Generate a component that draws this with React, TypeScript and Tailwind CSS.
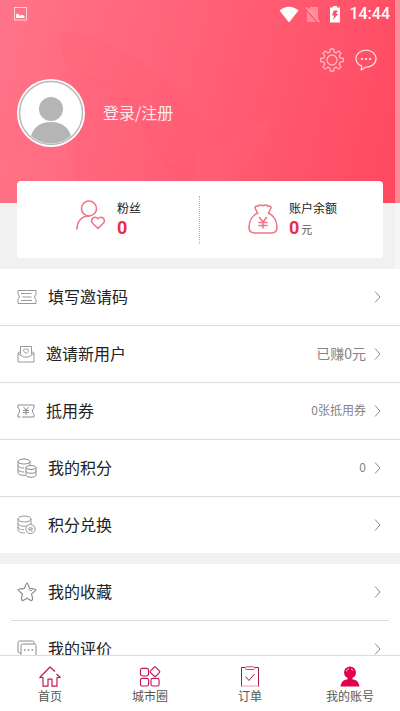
import { ReactNode } from "react";

type RowType = {
  title: string;
  icon: ReactNode;
  value?: string;
  small?: boolean;
  tight?: boolean;
  line?: "full" | "inset" | "none";
};

const StatusBar = () => {
  return (
    <div className="flex h-7 items-center justify-between pl-3.5 pr-2.5">
      <svg viewBox="0 0 13 14" className="h-3.5 w-[13px]" fill="none">
        <rect x="0.5" y="0.5" width="12" height="12.5" stroke="#ffd3da" />
        <path d="M2 11V7.500l1.500-1 1.500 1 1 1.300 1-.8h2l1.500 1.200V11z" fill="#fff" />
      </svg>
      <div className="flex items-center">
        <svg viewBox="0 0 20 17" className="mr-1.5 h-[17px] w-5" fill="#fff">
          <path d="M.5 4.500Q10-3 19.500 4.500L10 16.500z" />
        </svg>
        <svg viewBox="0 0 16 17" className="mr-2 h-[17px] w-4">
          <path d="M5.500 1H13v15H2V4.500z" fill="#ff8c9b" />
          <path d="M0 2.500l13.500 15" stroke="#ff5a70" strokeWidth="1.500" />
          <path d="M1 1.500l13.500 14.500" stroke="#ff9dab" strokeWidth="1.300" />
        </svg>
        <svg viewBox="0 0 12 17" className="mr-2 h-[17px] w-3">
          <path d="M4 0h4v1.500h3v15H1v-15h3z" fill="#fff" />
          <path d="M4.800 4.500h4L7 8h2.300L4 13.800 5.200 9.500H3z" fill="#ff5168" />
        </svg>
        <span className="font-[Roboto,sans-serif] text-[16px] font-medium leading-5 text-white">14:44</span>
      </div>
    </div>
  );
};

const GearIcon = () => (
  <svg viewBox="0 0 24 24" className="size-6" fill="none" stroke="#ffb9c2" strokeWidth="1.300" strokeLinejoin="round">
    <path d="M10.300 1h3.400l.5 3.100 2 .8 2.600-1.900 2.300 2.300-1.900 2.600.9 2.100 3.200.4v3.300l-3.200.5-.9 2 1.900 2.600-2.300 2.300-2.600-1.900-2 .8-.5 3h-3.400l-.5-3-2-.8L5.200 21.100l-2.300-2.300 1.900-2.600-.9-2-3.200-.5v-3.300l3.200-.4.9-2.100-1.900-2.600L5.200 3l2.600 1.900 2-.8z" />
    <circle cx="12" cy="12" r="5" />
  </svg>
);

const ChatIcon = () => (
  <svg viewBox="0 0 22 22" className="size-[22px]" fill="none">
    <path
      d="M6.800 17C3 15.500 1 13 1 9.700 1 4.900 5.500 1.200 11 1.200s10 3.700 10 8.500-4.500 8.400-10 8.400L6.200 20.900z"
      stroke="#ffe5e9"
      strokeWidth="1.200"
      strokeLinejoin="round"
    />
    <g fill="#fff">
      <circle cx="7" cy="10" r="1" />
      <circle cx="11" cy="10" r="1" />
      <circle cx="15" cy="10" r="1" />
    </g>
  </svg>
);

const Avatar = () => (
  <svg viewBox="0 0 68 68" className="size-[68px]">
    <defs>
      <clipPath id="face">
        <circle cx="34" cy="34" r="30.500" />
      </clipPath>
    </defs>
    <circle cx="34" cy="34" r="34" fill="#fff" />
    <circle cx="34" cy="34" r="31.500" fill="#fff" stroke="#b9b9b9" strokeWidth="1.500" />
    <g clipPath="url(#face)" fill="#b5b5b5">
      <circle cx="34" cy="30" r="12" />
      <path d="M13 62c1-12 9-19 21-19s20 7 21 19v6H13z" />
    </g>
  </svg>
);

const HeaderWaves = () => (
  <svg viewBox="0 0 400 203" preserveAspectRatio="none" className="absolute inset-0 h-full w-full">
    <path d="M60 32c40-2 95 35 120 62 14 16 20 28 24 34-14 20 0 40-14 46-40 5-40-65-80-86C85 76 60 78 60 32z" fill="#ff4a66" opacity=".1" />
    <path d="M60 70c50 5 80 25 95 70 10 25 35 40 60 25-20 30-100 30-130 38H78C70 160 80 120 60 70z" fill="#ff4a66" opacity=".08" />
    <path d="M0 155c30 2 45-20 60-60 0 50 15 80 20 108H0z" fill="#ff8c9c" opacity=".08" />
    <path d="M200 170c25-30 50-48 72-50-10 30-40 60-60 83h-40z" fill="#ff7a8c" opacity=".08" />
  </svg>
);

const FansIcon = () => (
  <svg viewBox="0 0 30 30" className="h-[30px] w-[30px]" fill="none" stroke="#ee7688" strokeWidth="1.600" strokeLinecap="round" strokeLinejoin="round">
    <circle cx="13" cy="8.500" r="7.500" />
    <path d="M1 29c0-8 5-13 12-13" />
    <path d="M22 28.500l-5.300-5.200c-3.300-3.300 1.500-8.300 5.300-4.600 3.800-3.700 8.600 1.300 5.300 4.600z" />
  </svg>
);

const MoneyBagIcon = () => (
  <svg viewBox="0 0 30 30" className="h-[30px] w-[30px]" fill="none" stroke="#ee7688" strokeWidth="1.600" strokeLinecap="round" strokeLinejoin="round">
    <path d="M9.500 9L7.300 4.500C6.500 2.500 8 1.600 10 2.200c1.300-1.500 3-1.500 5-.4 2-1.100 3.700-1.100 5 .4 2-.6 3.500.3 2.700 2.300L20.500 9" />
    <path d="M9.500 9C4.500 11.500 1 17 1 23c0 4 2 6 5.500 6h17c3.500 0 5.500-2 5.500-6 0-6-3.500-11.500-8.500-14" />
    <path d="M11.500 13.500l3.500 4.500 3.500-4.500M11 18.500h8M11 21.500h8M15 18v6" />
  </svg>
);

const TicketIcon = () => (
  <svg viewBox="0 0 20 16" className="w-5" fill="none" stroke="#999" strokeLinejoin="round">
    <path d="M1 1.500h18V5l-1.500 3 1.500 3v3.500H1V11l1.500-3L1 5z" />
    <path d="M4 4.500h10.500M5.500 8h9M4 11.500h11" />
  </svg>
);

const InviteIcon = () => (
  <svg viewBox="0 0 18 18" className="w-[18px]" fill="none" stroke="#999" strokeLinejoin="round">
    <path d="M3.500 9.500v-8h11v8M3.500 6.500L1 8v9h16V8l-2.500-1.500M1 8.500L6.500 12h5L17 8.500" />
    <path d="M9 8.500L6.800 6.400C5.500 4.800 7.600 3 9 4.700c1.400-1.700 3.500.1 2.200 1.700z" />
  </svg>
);

const CouponIcon = () => (
  <svg viewBox="0 0 18 14" className="w-[18px]" fill="none" stroke="#8c8c8c">
    <path d="M1 4V1h16v3c-2 1-2 5 0 6v3H5M3.500 13H1v-3c2-1 2-5 0-6" />
    <path d="M6.500 3L9 6l2.500-3M6 6.500h6M6 8.500h6M9 6v5" />
  </svg>
);

const CoinsIcon = () => (
  <svg viewBox="0 0 20 20" className="w-5" fill="none" stroke="#8c8c8c">
    <ellipse cx="7" cy="3.500" rx="6" ry="2.500" />
    <path d="M1 3.500V15c0 1.300 2.500 2.300 7 2.500M13 3.500V7M1 7.500c0 1.500 2.500 2.500 6 2.500M1 11.500c0 1.300 2.500 2.300 6 2.500" />
    <ellipse cx="14" cy="9.500" rx="5" ry="2" />
    <path d="M9 9.500v7.700c0 2.700 10 2.700 10 0V9.500M9 13.300c0 2.600 10 2.600 10 0" />
  </svg>
);

const ExchangeIcon = () => (
  <svg viewBox="0 0 19 20" className="w-[19px]" fill="none" stroke="#999">
    <ellipse cx="7.500" cy="4" rx="6.500" ry="3" />
    <path d="M1 4v11c0 1.600 2.500 2.800 7 3M14 4v5.500M1 8c0 2 2.500 3.200 6.500 3.200 2.500 0 4.500-.4 5.500-1.200M1 11.800c0 1.800 2.500 2.800 6 3" />
    <circle cx="13.500" cy="14" r="4.700" fill="#fff" />
    <path d="M12 11.500l.8 1M15 11.500l-.8 1M11.800 13h3.500v1.500h-3.500zM13 14.500l-1.300 2M14.300 14.500v1.700h1.500" strokeWidth=".8" />
  </svg>
);

const StarIcon = () => (
  <svg viewBox="0 0 20 20" className="w-5" fill="none" stroke="#8c8c8c" strokeWidth="1.200" strokeLinejoin="round">
    <path d="M10 1.200c.5 0 .8.5 2.700 5.300 5.500.4 6.300.4 6.300 1.200 0 .5-.6 1-4.500 4.200 1.500 5.400 1.600 6-.1 6.700-.6 0-1-.3-4.400-2.500-3.400 2.200-3.800 2.500-4.400 2.500-1.700-.7-1.600-1.300-.1-6.700C1.600 8.700 1 8.200 1 7.700c0-.8.8-.8 6.300-1.200C9.200 1.700 9.500 1.200 10 1.200z" />
    <path d="M11.500 7.500l1.200 1 2.300.2" strokeWidth=".8" />
  </svg>
);

const ReviewIcon = () => (
  <svg viewBox="0 0 20 20" className="w-5" fill="none" stroke="#8c8c8c" strokeLinejoin="round">
    <path d="M4 14H2.500C1.500 14 1 13.500 1 12.500v-9C1 2.500 1.500 2 2.500 2h13c1 0 1.500.5 1.500 1.500V5" />
    <path d="M5.500 5h12c1 0 1.500.5 1.500 1.500v9c0 1-.5 1.500-1.500 1.500H12l-2.500 2V17h-4c-1 0-1.500-.5-1.500-1.500v-9C4 5.500 4.500 5 5.500 5z" />
    <path d="M7 11h1.500M10.800 11h1.500M14.500 11H16" strokeWidth="1.500" />
  </svg>
);

const Arrow = () => (
  <svg viewBox="0 0 7 12" className="h-3 w-[7px]" fill="none" stroke="#8c8c8c">
    <path d="M1 .5L6 6l-5 5.500" />
  </svg>
);

const Row = ({ title, icon, value, small, tight, line = "full" }: RowType) => {
  return (
    <li className={line === "inset" ? "px-[11px]" : ""}>
      <a
        href="#"
        className={
          (line === "none" ? "h-14" : "h-[57px] border-b border-[#dcdcdc]") +
          (line === "inset" ? " pl-1.5 pr-2" : " pl-[17px] pr-[19px]") +
          " flex items-center"
        }
      >
        <span className={(tight ? "w-[29px]" : "w-[31px]") + " shrink-0"}>{icon}</span>
        <span className="flex-1 pb-0.5 text-[16px] leading-6 text-[#222]">{title}</span>
        {value && <span className={(small ? "text-[12px]" : "text-[14px]") + " mr-2 pb-0.5 leading-5 text-[#858585]"}>{value}</span>}
        <Arrow />
      </a>
    </li>
  );
};

const HomeIcon = () => (
  <svg viewBox="0 0 22 21" className="h-[21px] w-[22px]" fill="none" stroke="#c2185b" strokeWidth="1.200" strokeLinejoin="round">
    <path d="M16 5.500L11 1 .8 11.500H4v8.700h5v-7h4v7h5v-8.700h3.300L17.500 8" />
  </svg>
);

const CityIcon = () => (
  <svg viewBox="0 0 22 22" className="h-[21px] w-[22px]" fill="none" stroke="#c2185b" strokeWidth="1.200" strokeLinejoin="round">
    <rect x="1" y="2.500" width="8.500" height="8" rx="2" />
    <rect x="1" y="13" width="8.500" height="8" rx="2" />
    <rect x="12" y="13" width="8.500" height="8" rx="2" />
    <path d="M15.200 1.400c.6-.6 1.400-.6 2 0l3.600 3.700c.6.6.6 1.200 0 1.800l-3.600 3.600c-.6.600-1.400.600-2 0L11.600 7c-.6-.6-.6-1.300 0-1.900z" />
  </svg>
);

const OrderIcon = () => (
  <svg viewBox="0 0 20 21" className="h-[21px] w-5" fill="none" stroke="#a3174e" strokeLinejoin="round">
    <path d="M5 1.500H1.500v19M15 1.500h3.500v19" />
    <path d="M1.500 20h17" stroke="#f29ab5" />
    <rect x="5.500" y=".8" width="9" height="2.700" rx="1" stroke="#d0446f" />
    <path d="M5.500 10.500l3.500 4L14.500 8" />
  </svg>
);

const AccountIcon = () => (
  <svg viewBox="0 0 20 21" className="h-[21px] w-5">
    <g fill="#e5004f">
      <circle cx="10" cy="6.500" r="6" />
      <path d="M7.500 11h5v2.500c3.800 0 6.300 2.500 7 7H.5c.7-4.500 3.200-7 7-7z" />
    </g>
    <path d="M6.300 5.500C6.700 4 7.700 3 9 2.800M11 2.900c1 .2 1.800.8 2.200 1.600" stroke="#ffd9e4" fill="none" />
  </svg>
);

const tabs = [
  { title: "首页", icon: <HomeIcon /> },
  { title: "城市圈", icon: <CityIcon /> },
  { title: "订单", icon: <OrderIcon /> },
  { title: "我的账号", icon: <AccountIcon /> },
];

const App = () => {
  return (
    <div className="flex h-dvh flex-col bg-white font-['Noto_Sans_CJK_SC',sans-serif]">
      <main className="min-h-0 flex-1 overflow-y-auto bg-[#f1f1f1] [scrollbar-width:none]">
        <div className="relative pb-[11px]">
          <header className="relative bg-linear-105 from-[#ff7489] via-[#ff5f77] via-50% to-[#ff485e] pb-14">
            <HeaderWaves />
            <div className="relative">
              <StatusBar />
              <div className="flex items-center justify-end gap-[11px] pr-[23px] pt-5">
                <button type="button" aria-label="设置">
                  <GearIcon />
                </button>
                <button type="button" aria-label="消息">
                  <ChatIcon />
                </button>
              </div>
              <a href="#" className="flex w-fit items-center gap-[18px] pl-[17px] pt-[7px]">
                <Avatar />
                <span className="pb-0.5 text-[16px] leading-6 text-[#ffe9ec]">登录/注册</span>
              </a>
            </div>
          </header>
          <section className="relative mx-[17px] -mt-[22px] grid h-[77px] grid-cols-2 items-center rounded bg-white">
            <a href="#" className="flex h-12 items-start gap-[11px] border-r border-dotted border-[#e59aa8] pl-[59px]">
              <span className="pt-1">
                <FansIcon />
              </span>
              <div className="pt-0.5">
                <p className="text-[12px] leading-5 text-[#222]">粉丝</p>
                <p className="font-[Roboto,sans-serif] text-[18px] font-bold leading-5 text-[#ea2e49]">0</p>
              </div>
            </a>
            <a href="#" className="flex h-12 items-start gap-[11px] pl-12">
              <span className="pt-2">
                <MoneyBagIcon />
              </span>
              <div className="pt-0.5">
                <p className="text-[12px] leading-5 text-[#222]">账户余额</p>
                <p className="flex items-baseline gap-0.5 text-[11px] leading-5 text-[#555]">
                  <span className="font-[Roboto,sans-serif] text-[18px] font-bold text-[#ea2e49]">0</span>元
                </p>
              </div>
            </a>
          </section>
          <div className="absolute inset-y-0 right-0 w-[5px] bg-white/35" />
        </div>
        <ul className="bg-white">
          <Row title="填写邀请码" icon={<TicketIcon />} />
          <Row title="邀请新用户" icon={<InviteIcon />} value="已赚0元" tight />
          <Row title="抵用券" icon={<CouponIcon />} value="0张抵用券" small tight />
          <Row title="我的积分" icon={<CoinsIcon />} value="0" small />
          <Row title="积分兑换" icon={<ExchangeIcon />} line="none" />
        </ul>
        <ul className="mt-[11px] bg-white">
          <Row title="我的收藏" icon={<StarIcon />} line="inset" />
          <Row title="我的评价" icon={<ReviewIcon />} line="inset" />
        </ul>
      </main>
      <nav className="flex h-14 shrink-0 border-t border-[#dcdcdc] bg-white">
        {tabs.map((tab) => (
          <a key={tab.title} href="#" className="flex flex-1 flex-col items-center pt-2.5">
            {tab.icon}
            <span className="text-[12px] leading-[18px] text-[#555]">{tab.title}</span>
          </a>
        ))}
      </nav>
    </div>
  );
};

export default App;
